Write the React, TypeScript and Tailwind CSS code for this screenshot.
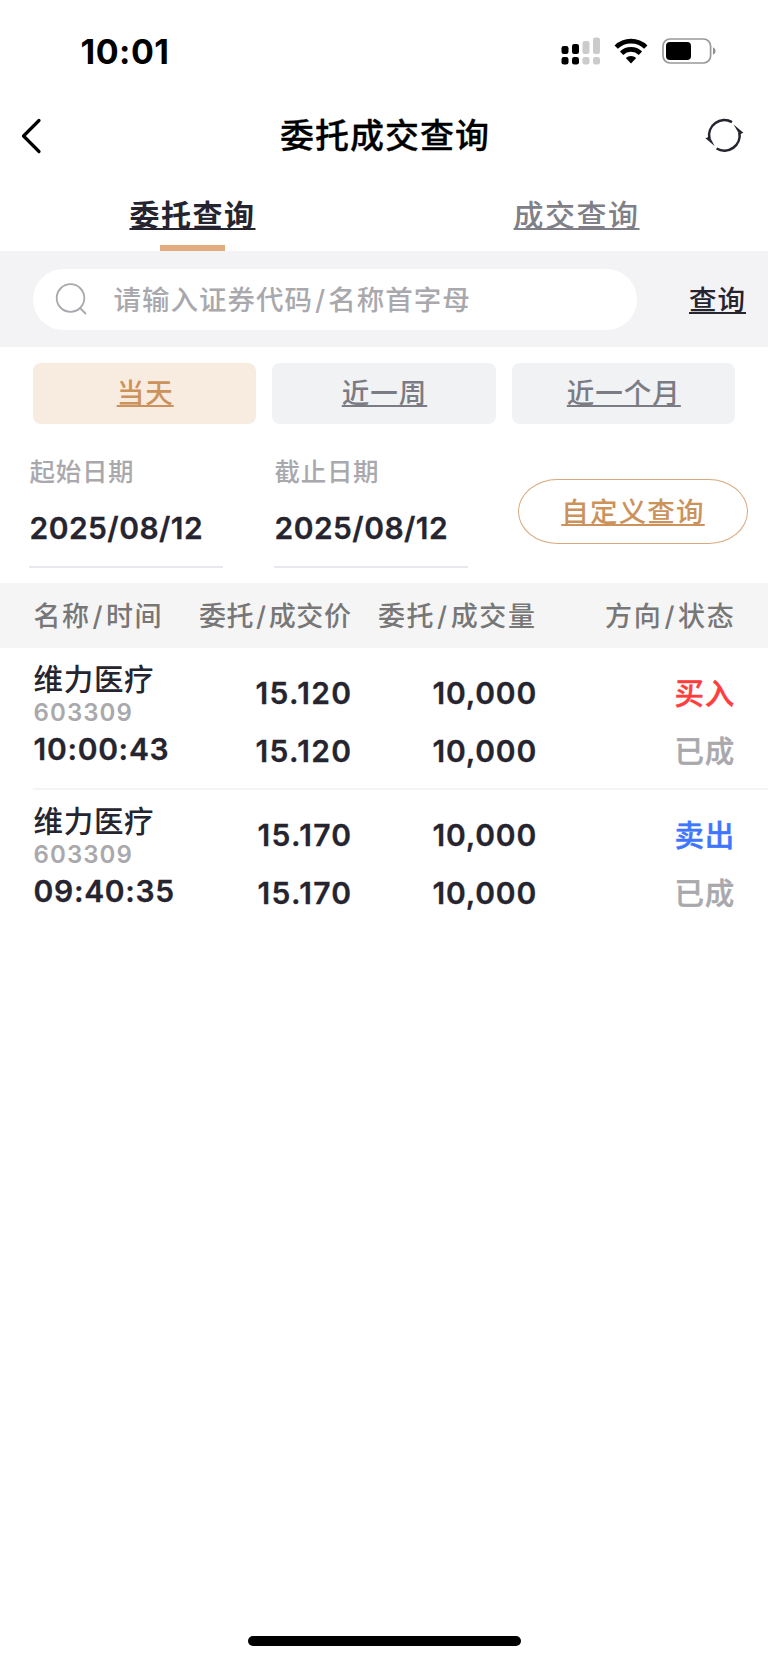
import type { ReactNode } from "react";

type Order = {
  name: string;
  code: string;
  time: string;
  price: string;
  volume: string;
  side: "买入" | "卖出";
  status: string;
};

const orders: Order[] = [
  { name: "维力医疗", code: "603309", time: "10:00:43", price: "15.120", volume: "10,000", side: "买入", status: "已成" },
  { name: "维力医疗", code: "603309", time: "09:40:35", price: "15.170", volume: "10,000", side: "卖出", status: "已成" },
];

function Slash() {
  return <span className="mr-[2px] ml-[2px]">/</span>;
}

function StatusBar() {
  return (
    <div className="flex h-[102px] items-center justify-between pr-[52px] pl-[80.5px]">
      <span className="pt-[1px] text-[34px] leading-[40px] font-bold tracking-[0.5px] text-black">10:01</span>
      <div className="flex items-center">
        <svg width="39" height="28" viewBox="0 0 39 28">
          <g fill="#000">
            <rect x="0.5" y="9" width="7" height="8" rx="2.2" />
            <rect x="11" y="7" width="7" height="10" rx="2.2" />
            <rect x="0.5" y="20" width="7" height="7.6" rx="2.4" />
            <rect x="11" y="20" width="7" height="7.6" rx="2.4" />
          </g>
          <g fill="#cbcbcb">
            <rect x="21.5" y="4" width="7" height="13" rx="2.2" />
            <rect x="32" y="0.5" width="7" height="16.5" rx="2.2" />
            <rect x="21.5" y="20" width="7" height="7.6" rx="2.4" />
            <rect x="32" y="20" width="7" height="7.6" rx="2.4" />
          </g>
        </svg>
        <svg className="ml-[14px]" width="34" height="26" viewBox="0 0 34 26">
          <g fill="none" stroke="#000" strokeWidth="4.8">
            <path d="M2.2 9.1A21.2 21.2 0 0 1 31.8 9.1" />
            <path d="M7.6 15.2A13.6 13.6 0 0 1 26.4 15.2" />
          </g>
          <path d="M17 25.4l-5.2-5.3a7.4 7.4 0 0 1 10.4 0z" fill="#000" />
        </svg>
        <svg className="ml-[14px]" width="54" height="26" viewBox="0 0 54 26">
          <rect x="1" y="1" width="47.6" height="24" rx="7" fill="none" stroke="#999" strokeWidth="1.7" />
          <rect x="4" y="4" width="25" height="18" rx="4" fill="#000" />
          <path d="M51 9.2c3.4 1.6 3.4 6 0 7.6z" fill="#8f8f8f" />
        </svg>
      </div>
    </div>
  );
}

function NavBar() {
  return (
    <div className="flex h-[68px] items-center justify-between pr-[24px] pl-[20px]">
      <svg width="40" height="36" viewBox="0 0 40 36">
        <path d="M19 2.5L3.5 18l15.5 15.5" fill="none" stroke="#000" strokeWidth="3.2" strokeLinecap="round" strokeLinejoin="round" />
      </svg>
      <h1 className="pl-[6px] text-[34px] leading-[40px] font-medium tracking-[1px] text-black [-webkit-text-stroke:0.3px]">委托成交查询</h1>
      <svg width="40" height="36" viewBox="0 0 40 36">
        <g fill="none" stroke="#25242f" strokeWidth="2.6">
          <path d="M5.4 20.5A15.3 15.3 0 0 1 28 4.1" />
          <path d="M35.4 14.5A15.3 15.3 0 0 1 12.6 30.5" />
        </g>
        <path d="M29.6 6.5L39.4 14.8l-4 1.6z" fill="#25242f" />
        <path d="M10.6 28L1.4 20.2l4.2-1.6z" fill="#25242f" />
      </svg>
    </div>
  );
}

function Tabs() {
  return (
    <div className="grid h-[81px] grid-cols-2 text-[30px] leading-[40px] tracking-[1.5px]">
      <div className="relative flex justify-center pt-[25px] pl-[1px]">
        <span className="font-bold text-[#25242f] underline decoration-2 underline-offset-[2px]">委托查询</span>
        <span className="absolute bottom-0 left-[159.5px] h-[6px] w-[65px] bg-[#e2ad7c]" />
      </div>
      <div className="flex justify-center pt-[25px] pl-[1px]">
        <span className="font-medium text-[#7f8087] underline decoration-2 underline-offset-[2px]">成交查询</span>
      </div>
    </div>
  );
}

function SearchBar() {
  return (
    <div className="flex h-[96px] items-center justify-between bg-[#f3f3f5] pr-[22px] pl-[33px] text-[27.5px] leading-[36px] tracking-[1px]">
      <div className="flex h-[61px] w-[604px] items-center rounded-full bg-white pl-[22px]">
        <svg width="32" height="32" viewBox="0 0 32 32" fill="none" stroke="#a9a9ad" strokeWidth="1.8">
          <circle cx="15.5" cy="15" r="13.8" />
          <path d="M25 25l6 6" />
        </svg>
        <span className="ml-[26.5px] pt-[1px] font-medium text-[#a9a9ad]">
          请输入证券代码
          <Slash />
          名称首字母
        </span>
      </div>
      <span className="pt-[1px] font-medium text-[#25242f] underline decoration-2 underline-offset-[2px]">查询</span>
    </div>
  );
}

function Chip({ active, children }: { active?: boolean; children: ReactNode }) {
  return (
    <div
      className={
        "flex h-[61px] items-center justify-center rounded-[8px] pl-[1px] text-[27.5px] leading-[36px] font-medium tracking-[1px] " +
        (active ? "bg-[#f8ebdf] text-[#cb925c]" : "bg-[#f1f2f4] text-[#7b7c83]")
      }
    >
      <span className="underline decoration-2 underline-offset-[2px]">{children}</span>
    </div>
  );
}

function DateField({ label, value }: { label: string; value: string }) {
  return (
    <div className="w-[193.5px] border-b-2 border-[#e8e9ed]">
      <div className="pl-[0.5px] text-[25.5px] leading-[36px] font-medium tracking-[0.7px] text-[#a9a9ad]">{label}</div>
      <div className="mt-[20px] mb-[20px] pl-[0.5px] text-[30px] leading-[36px] font-semibold tracking-[0.45px] text-[#25242f] [-webkit-text-stroke:0.3px]">
        {value}
      </div>
    </div>
  );
}

function OrderRow({ order, last }: { order: Order; last: boolean }) {
  return (
    <div
      className={
        "ml-[33px] grid h-[141.7px] grid-cols-[150px_169.5px_184.5px_198px] border-b-2 text-[30px] font-semibold text-[#25242f] " +
        (last ? "border-transparent" : "border-[#f4f4f5]")
      }
    >
      <div className="flex flex-col pt-[12px] pl-[0.5px]">
        <span className="text-[29.5px] leading-[38px] font-medium tracking-[0.7px]">{order.name}</span>
        <span className="text-[24px] leading-[30px] tracking-[1.1px] text-[#a9a9ad]">{order.code}</span>
        <span className="mt-[3px] leading-[36px] tracking-[0.7px] [-webkit-text-stroke:0.3px]">{order.time}</span>
      </div>
      <div className="flex flex-col items-end gap-[22px] pt-[27px] leading-[36px] tracking-[1.35px] [-webkit-text-stroke:0.3px]">
        <span>{order.price}</span>
        <span>{order.price}</span>
      </div>
      <div className="flex flex-col items-end gap-[22px] pt-[27px] leading-[36px] tracking-[0.8px] [-webkit-text-stroke:0.3px]">
        <span>{order.volume}</span>
        <span>{order.volume}</span>
      </div>
      <div className="flex flex-col items-end gap-[22px] pt-[27px] text-[29.5px] leading-[36px] font-medium tracking-[0.7px] [-webkit-text-stroke:0.4px]">
        <span className={order.side === "买入" ? "text-[#ff3d3d]" : "text-[#3f76ff]"}>{order.side}</span>
        <span className="text-[#a9a9ad]">{order.status}</span>
      </div>
    </div>
  );
}

export default function App() {
  return (
    <div className="flex h-[1663px] w-[768px] flex-col overflow-hidden bg-white font-['Inter','Noto_Sans_CJK_SC',sans-serif] whitespace-nowrap">
      <StatusBar />
      <NavBar />
      <Tabs />
      <SearchBar />
      <div className="mt-[15.5px] grid grid-cols-3 gap-4 pr-[33px] pl-[33px]">
        <Chip active>当天</Chip>
        <Chip>近一周</Chip>
        <Chip>近一个月</Chip>
      </div>
      <div className="mt-[30.5px] flex pl-[29px]">
        <DateField label="起始日期" value="2025/08/12" />
        <div className="ml-[51.5px]">
          <DateField label="截止日期" value="2025/08/12" />
        </div>
        <div className="mt-[25px] ml-[50px] flex h-[65px] w-[230px] items-center justify-center rounded-[40px/33px] border border-[#d9a87c] pl-[1px] text-[27.5px] leading-[36px] font-medium tracking-[1.2px] text-[#cb925c]">
          <span className="underline decoration-2 underline-offset-[2px]">自定义查询</span>
        </div>
      </div>
      <div className="mt-[15px] grid h-[65px] grid-cols-[150px_168px_185px_199px] items-center bg-[#f5f5f5] pt-[2px] pl-[33.5px] text-[27px] leading-[36px] font-medium tracking-[1.5px] text-[#777777]">
        <span>名称<Slash />时间</span>
        <span className="text-right tracking-[0.6px]">委托<Slash />成交价</span>
        <span className="text-right tracking-[1.6px]">委托<Slash />成交量</span>
        <span className="text-right tracking-[1.7px]">方向<Slash />状态</span>
      </div>
      {orders.map((order, i) => (
        <OrderRow key={order.time} order={order} last={i === orders.length - 1} />
      ))}
      <div className="mt-auto mb-[17px] ml-[247.5px] h-[10px] w-[273.5px] rounded-full bg-black" />
    </div>
  );
}
